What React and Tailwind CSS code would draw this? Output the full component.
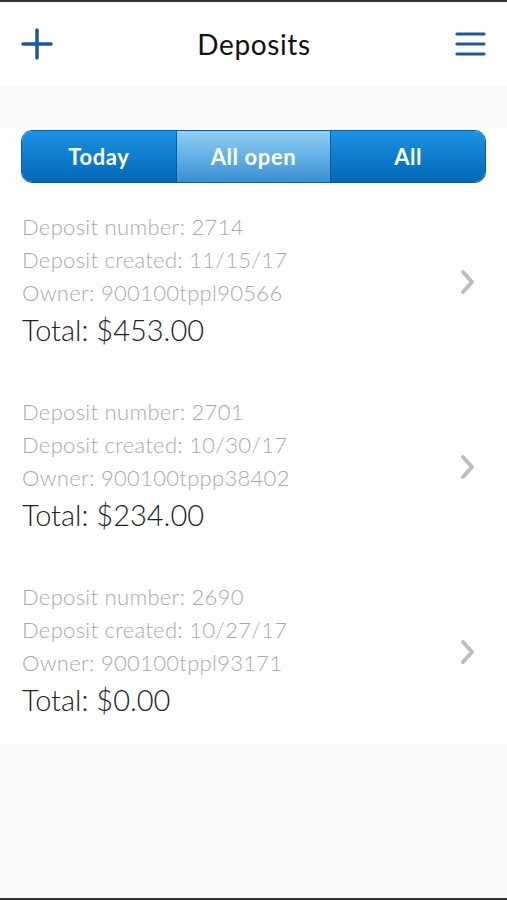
import React from "react";

const items = [
  { num: "2714", created: "11/15/17", owner: "900100tppl90566", total: "$453.00" },
  { num: "2701", created: "10/30/17", owner: "900100tppp38402", total: "$234.00" },
  { num: "2690", created: "10/27/17", owner: "900100tppl93171", total: "$0.00" },
];

function Chevron() {
  return (
    <svg width="20" height="28" viewBox="0 0 20 28" fill="none">
      <path d="M5 4 L14 14 L5 24" stroke="#bdbdbd" strokeWidth="4" strokeLinecap="round" strokeLinejoin="round" />
    </svg>
  );
}

export default function App() {
  return (
    <div className="w-[507px] h-[900px] flex flex-col bg-[#f9f9f9] border-t-2 border-b-2 border-[#333333] overflow-hidden" style={{ fontFamily: "Lato, 'Open Sans', sans-serif" }}>
      <header className="h-[84px] bg-white flex items-center justify-between px-[21px] shrink-0">
        <svg width="32" height="32" viewBox="0 0 32 32">
          <path d="M16 2 V30 M2 16 H30" stroke="#1a5a97" strokeWidth="3.5" strokeLinecap="round" />
        </svg>
        <h1 className="text-[28px] text-[#111] font-normal tracking-[0.6px]">Deposits</h1>
        <svg width="31" height="26" viewBox="0 0 31 26">
          <path d="M2 3 H29 M2 13 H29 M2 23 H29" stroke="#1a5a97" strokeWidth="3.2" strokeLinecap="round" />
        </svg>
      </header>
      <div className="h-[42px] shrink-0" />
      <section className="bg-white pt-[2px] pb-[25px]">
        <div className="mx-[21px] h-[53px] rounded-[11px] border border-[#0a5c9c] flex overflow-hidden">
          <button className="flex-1 bg-gradient-to-b from-[#1b93e4] to-[#0467b6] text-white font-bold text-[22px] tracking-[0.6px] flex items-center justify-center">Today</button>
          <button className="flex-1 bg-gradient-to-b from-[#8dd0f6] to-[#3a8fd2] text-white font-bold text-[22px] tracking-[0.6px] flex items-center justify-center border-x border-[#0a5c9c]">All open</button>
          <button className="flex-1 bg-gradient-to-b from-[#1b93e4] to-[#0467b6] text-white font-bold text-[22px] tracking-[0.6px] flex items-center justify-center">All</button>
        </div>
        <div className="flex flex-col gap-[46px] mt-[27px] pl-[22px] pr-[29px]">
          {items.map((it) => (
            <div key={it.num} className="flex items-center justify-between">
              <div className="flex flex-col">
                <div className="text-[22px] leading-[33px] font-light text-[#aaaaaa] tracking-[0.3px]">Deposit number: {it.num}</div>
                <div className="text-[22px] leading-[33px] font-light text-[#aaaaaa] tracking-[0.3px]">Deposit created: {it.created}</div>
                <div className="text-[22px] leading-[33px] font-light text-[#aaaaaa] tracking-[0.3px]">Owner: {it.owner}</div>
                <div className="text-[29px] leading-[38px] pt-[2px] font-light text-[#222]">Total: {it.total}</div>
              </div>
              <div className="mt-[4px]"><Chevron /></div>
            </div>
          ))}
        </div>
      </section>
    </div>
  );
}
